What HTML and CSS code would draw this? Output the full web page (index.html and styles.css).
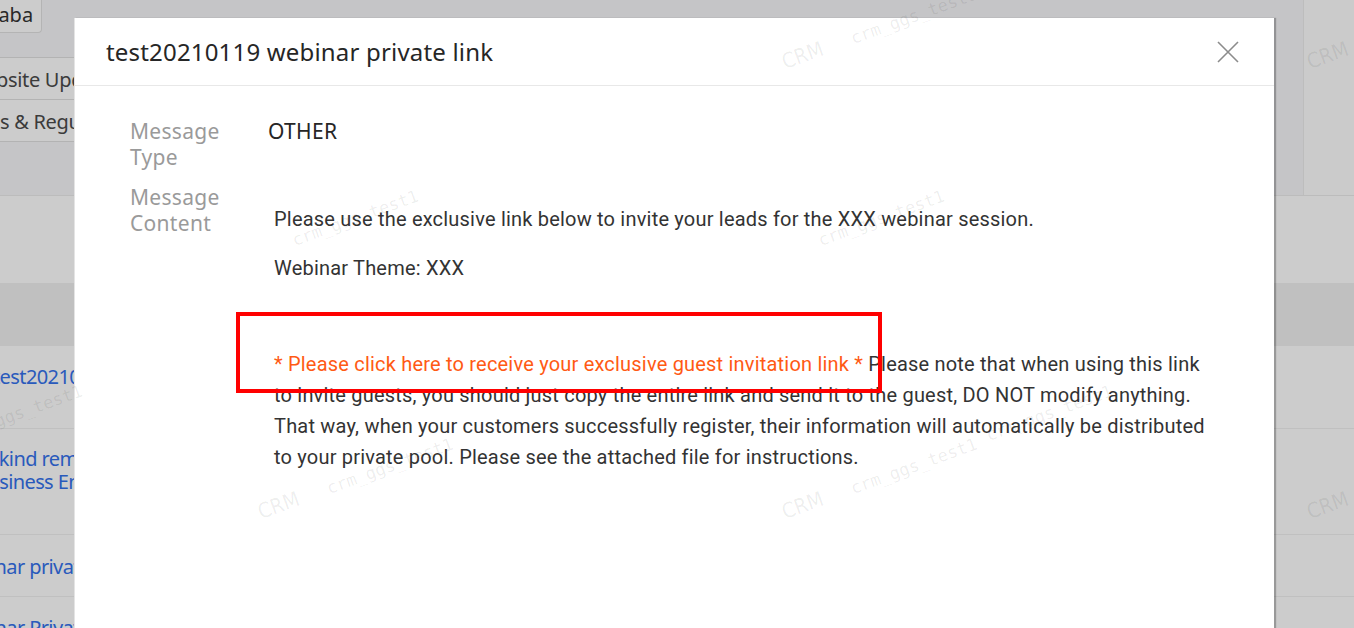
FILE: index.html
```html
<!DOCTYPE html>
<html lang="en">
<head>
<meta charset="utf-8">
<title>test20210119 webinar private link</title>
<link rel="stylesheet" href="styles.css">
</head>
<body>
<div class="page">
  <div class="top">
    <div class="top-main">
      <div class="btn"><span class="clip">Alibaba</span></div>
      <ul class="menu">
        <li><span class="clip clip-menu1">Website Updates</span></li>
        <li><span class="clip clip-menu2">Rules &amp; Regulations</span></li>
      </ul>
    </div>
    <div class="side-panel"></div>
  </div>
  <div class="table">
    <div class="row row-blank"></div>
    <div class="thead"></div>
    <div class="row row-1"><a class="link"><span class="clip clip-r1">test20210119 webinar private link</span></a></div>
    <div class="row row-2"><a class="link"><span class="clip clip-r2a">A kind reminder</span><span class="clip clip-r2b">Business Entity</span></a></div>
    <div class="row row-3"><a class="link"><span class="clip clip-r3">Webinar private link</span></a></div>
    <div class="row row-4"><a class="link"><span class="clip clip-r4">Webinar Private link</span></a></div>
  </div>
</div>

<div class="mask"></div>

<div class="modal">
  <div class="modal-header">
    <h2 class="modal-title">test20210119 webinar private link</h2>
    <button class="close" aria-label="Close">
      <svg width="22" height="22" viewBox="0 0 22 22"><path d="M1 1L21 21M21 1L1 21" stroke="#8c8c8c" stroke-width="1.6" fill="none"/></svg>
    </button>
  </div>
  <div class="modal-body">
    <div class="field">
      <div class="label">Message Type</div>
      <div class="value">OTHER</div>
    </div>
    <div class="field">
      <div class="label">Message Content</div>
      <div class="value content">
        <p>Please use the exclusive link below to invite your leads for the XXX webinar session.</p>
        <p>Webinar Theme: XXX</p>
        <p class="empty"><br></p>
        <p class="notice"><span class="orange">* Please click here to receive your exclusive guest invitation link *</span> Please note that when using this link to invite guests, you should just copy the entire link and send it to the guest, DO NOT modify anything. That way, when your customers successfully register, their information will automatically be distributed to your private pool. Please see the attached file for instructions.</p>
      </div>
    </div>
  </div>
  <div class="annotation"></div>
</div>

<div class="watermarks" aria-hidden="true">
  <div class="wm wm-a"><span class="wm-big">CRM</span><span class="wm-small">crm_ggs_test1</span></div>
  <div class="wm wm-b"><span class="wm-big">CRM</span><span class="wm-small">crm_ggs_test1</span></div>
  <div class="wm wm-c"><span class="wm-big">CRM</span><span class="wm-small">crm_ggs_test1</span></div>
  <div class="wm wm-d"><span class="wm-big">CRM</span><span class="wm-small">crm_ggs_test1</span></div>
  <div class="wm wm-e"><span class="wm-big">CRM</span><span class="wm-small">crm_ggs_test1</span></div>
  <div class="wm wm-f"><span class="wm-small">crm_ggs_test1</span></div>
  <div class="wm wm-g"><span class="wm-small">crm_ggs_test1</span></div>
  <div class="wm wm-h"><span class="wm-small">crm_ggs_test1</span></div>
  <div class="wm wm-i"><span class="wm-small">crm_ggs_test1</span></div>
</div>
</body>
</html>
```

FILE: styles.css
```css
* { box-sizing: border-box; }
html, body { margin: 0; padding: 0; }
body {
  width: 1354px;
  height: 628px;
  overflow: hidden;
  font-family: "Noto Sans", "Open Sans", sans-serif;
  background: #f7f7f9;
  position: relative;
}

/* ---------- background page ---------- */
.page { width: 1354px; }
.top {
  display: flex;
  height: 196px;
  border-bottom: 1px solid #ececec;
  background: #f7f7f9;
}
.top-main { flex: 1; }
.side-panel {
  width: 51px;
  border-left: 1px solid #ededed;
  background: #fefefe;
}
.btn {
  width: 42px;
  height: 33px;
  background: #fff;
  border: 1px solid #e2e2e2;
  border-top: none;
  border-left: none;
  border-radius: 0 0 4px 0;
  overflow: hidden;
  white-space: nowrap;
  font-size: 20px;
  line-height: 30px;
  color: #333;
}
.clip { display: block; white-space: nowrap; }
.btn .clip { margin-left: -37px; }
.menu {
  list-style: none;
  margin: 24px 0 0;
  padding: 0;
  width: 400px;
  border-top: 1px solid #e0e0e0;
}
.menu li {
  height: 42px;
  padding-top: 3px;
  line-height: 38px;
  font-size: 20px;
  letter-spacing: -0.3px;
  color: #4a4a4a;
  background: #fff;
  border-bottom: 1px solid #e0e0e0;
  overflow: hidden;
}
.clip-menu1 { margin-left: -33px; }
.clip-menu2 { margin-left: -40px; }

.table { background: #fff; }
.row {
  border-bottom: 1px solid #f0f0f0;
  padding-top: 19px;
  overflow: hidden;
}
.row-blank { height: 87px; padding: 0; border: none; }
.thead { height: 63px; background: #f1f1f1; }
.row-1 { height: 83px; }
.row-2 { height: 106px; padding-top: 18px; }
.row-3 { height: 62px; padding-top: 20px; }
.row-4 { height: 62px; padding-top: 19px; }
.link {
  display: block;
  font-size: 20px;
  letter-spacing: -0.6px;
  line-height: 23px;
  color: #3471ec;
}
.clip-r1 { margin-left: -7px; }
.clip-r2a { margin-left: -18px; }
.clip-r2b { margin-left: -25px; }
.clip-r3 { margin-left: -50px; }
.clip-r4 { margin-left: -50px; }

.mask {
  position: absolute;
  inset: 0;
  background: rgba(0, 0, 0, 0.2);
}

/* ---------- modal ---------- */
.modal {
  position: absolute;
  left: 74px;
  top: 18px;
  width: 1200px;
  height: 700px;
  background: #fff;
  border-left: 1px solid #e4e4e4;
  box-shadow: 2px 0 1px rgba(0, 0, 0, 0.25);
}
.modal-header {
  height: 68px;
  display: flex;
  align-items: center;
  justify-content: space-between;
  padding: 0 35px 0 31px;
  border-bottom: 1px solid #e8e8e8;
}
.modal-title {
  margin: 0;
  font-size: 24px;
  font-weight: 400;
  letter-spacing: 0.18px;
  color: #262626;
}
.close {
  width: 22px;
  height: 22px;
  padding: 0;
  border: none;
  background: none;
  display: flex;
}
.modal-body {
  padding: 32px 55px 0 55px;
}
.field {
  display: flex;
  margin-bottom: 14px;
}
.label {
  width: 112px;
  margin-right: 26px;
  font-size: 21px;
  letter-spacing: 0.3px;
  line-height: 26px;
  color: #9a9a9a;
}
.value {
  flex: 1;
  font-size: 21px;
  letter-spacing: 0.3px;
  line-height: 26px;
  color: #262626;
}
.content {
  padding-left: 6px;
  padding-top: 2px;
  font-family: Roboto, "Noto Sans", sans-serif;
  font-size: 20px;
  letter-spacing: 0.2px;
  line-height: 31px;
  color: #333;
}
.content p { margin: 18px 0; }
.content p.empty { margin-bottom: 0; }
.content p.notice { margin-top: 16px; }
.orange { color: #ff5a14; }

.annotation {
  position: absolute;
  left: 161px;
  top: 294px;
  width: 646px;
  height: 81px;
  border: 4px solid #ff0000;
}

/* ---------- watermarks ---------- */
.watermarks {
  position: absolute;
  inset: 0;
  pointer-events: none;
}
.wm {
  position: absolute;
  white-space: nowrap;
  transform: rotate(-20deg);
  transform-origin: 0 100%;
  color: rgba(0, 0, 0, 0.075);
  line-height: 20px;
  height: 20px;
}
.wm-big {
  font-family: "Liberation Sans Narrow", "DejaVu Sans Condensed", sans-serif;
  font-stretch: condensed;
  font-size: 21px;
  margin-right: 30px;
}
.wm-small {
  font-family: "DejaVu Sans Mono", monospace;
  font-size: 17px;
}
.wm-a { left: 786px; top: 52px; }
.wm-b { left: 262px; top: 502px; }
.wm-c { left: 786px; top: 502px; }
.wm-d { left: 1311px; top: 52px; }
.wm-e { left: 1311px; top: 502px; }
.wm-f { left: 822px; top: 230px; }
.wm-g { left: 296px; top: 230px; }
.wm-h { left: -40px; top: 425px; }
.wm-i { left: 990px; top: 425px; }
```
